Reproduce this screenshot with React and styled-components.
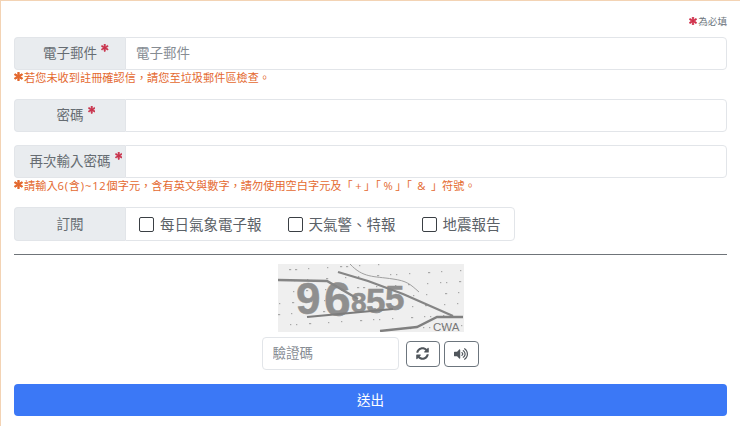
import React from 'react';
import styled, { createGlobalStyle } from 'styled-components';
import { FaSyncAlt, FaVolumeUp, FaAsterisk } from 'react-icons/fa';

const GlobalStyle = createGlobalStyle`
  html, body {
    margin: 0;
    padding: 0;
    background: #fff;
  }
  * {
    box-sizing: border-box;
  }
`;

const Page = styled.div`
  width: 740px;
  height: 426px;
  overflow: hidden;
  border-top: 1px solid #f3d3b4;
  border-left: 1px solid #f3d3b4;
  padding: 14px 13px 0 13px;
  font-family: "Open Sans", "Noto Sans CJK TC", "Liberation Sans", sans-serif;
  color: #212529;
`;

const RequiredNote = styled.div`
  display: flex;
  justify-content: flex-end;
  align-items: center;
  gap: 1px;
  height: 14px;
  padding-bottom: 2px;
  font-size: 9.6px;
  color: #6c757d;
  margin-bottom: 8px;
`;

const Star = styled(FaAsterisk)`
  width: ${(p) => p.$size || 8}px;
  height: ${(p) => p.$size || 8}px;
  color: ${(p) => p.$color || '#d0304a'};
  stroke: currentColor;
  stroke-width: 50;
  flex: none;
`;

const Group = styled.div`
  display: flex;
  width: ${(p) => p.$width || '713px'};
  height: ${(p) => p.$height || 33}px;
  margin-bottom: ${(p) => p.$gap || 0}px;
`;

const Label = styled.div`
  width: 111px;
  flex: none;
  display: flex;
  justify-content: center;
  align-items: center;
  background: #e9ecef;
  border: 1px solid #e2e5e9;
  border-right: none;
  border-radius: 4px 0 0 4px;
  padding-bottom: 3px;
  font-size: 13.5px;
  color: #666c72;
`;

const LabelText = styled.span`
  position: relative;
`;

const LabelMark = styled(FaAsterisk)`
  position: absolute;
  left: 100%;
  top: 2px;
  margin-left: 4px;
  width: 7.5px;
  height: 7.5px;
  color: #c9304a;
  stroke: currentColor;
  stroke-width: 40;
`;

const Field = styled.input`
  flex: 1;
  min-width: 0;
  border: 1px solid #e2e5e9;
  border-radius: 0 4px 4px 0;
  padding: 0 10px 2px;
  font: inherit;
  font-size: 13.5px;
  outline: none;

  &::placeholder {
    color: #868c93;
    opacity: 1;
  }
`;

const Hint = styled.div`
  display: flex;
  align-items: center;
  gap: 1px;
  height: 15px;
  padding-bottom: 2px;
  font-size: 11.2px;
  color: #e4692f;
  margin-bottom: ${(p) => p.$gap || 0}px;
  white-space: pre;
`;

const Digits = styled.span`
  letter-spacing: 0.8px;
`;

const Symbol = styled.span`
  padding: 0 2.5px;
`;

const CheckPanel = styled.div`
  flex: 1;
  display: flex;
  align-items: center;
  gap: 26px;
  padding-left: 13px;
  border: 1px solid #e2e5e9;
  border-radius: 0 4px 4px 0;
`;

const CheckItem = styled.label`
  display: flex;
  align-items: center;
  gap: 6px;
  font-size: 14.5px;
  color: #5b6167;
`;

const CheckText = styled.span`
  position: relative;
  top: -1px;
`;

const Box = styled.input`
  appearance: none;
  width: 15px;
  height: 15px;
  margin: 0;
  background: #fff;
  border: 1px solid #3a3f44;
  border-radius: 2px;
`;

const Divider = styled.hr`
  margin: 13px 0 9px;
  border: none;
  border-top: 1px solid #6f7479;
`;

const CaptchaBlock = styled.div`
  display: flex;
  flex-direction: column;
  align-items: center;
  gap: 5px;
  margin-bottom: 14px;
`;

const CaptchaImage = styled.svg`
  display: block;
  width: 186px;
  height: 68px;
`;

const CaptchaRow = styled.div`
  display: flex;
  align-items: center;
  gap: 7px;
  margin-left: -1px;
`;

const CaptchaInput = styled.input`
  width: 137px;
  height: 33px;
  border: 1px solid #e2e5e9;
  border-radius: 4px;
  padding: 0 10px 2px;
  font: inherit;
  font-size: 13.5px;
  outline: none;

  &::placeholder {
    color: #868c93;
    opacity: 1;
  }
`;

const IconButton = styled.button`
  width: ${(p) => p.$width}px;
  height: 26px;
  display: flex;
  align-items: center;
  justify-content: center;
  padding: 0;
  background: #fff;
  border: 1px solid #6c757d;
  border-radius: 4px;
  color: #50565c;
  font-size: ${(p) => p.$icon}px;
`;

const IconGroup = styled.div`
  display: flex;
  gap: 4px;
`;

const Submit = styled.button`
  display: block;
  width: 713px;
  height: 32px;
  border: none;
  border-radius: 4px;
  background: #3b78f6;
  color: #fff;
  font: inherit;
  font-size: 13.5px;
  padding-bottom: 3px;
`;

// scattered noise of the captcha, same every render
const dots = Array.from({ length: 80 }, (_, i) => [
  (i * 67 + 11) % 184,
  (i * 29 + 5) % 66,
  i % 3 === 0 ? 2.2 : 1.3,
]);

const Captcha = () => (
  <CaptchaImage viewBox="0 0 186 68">
    <rect width="186" height="68" fill="#efefef" />
    {dots.map(([x, y, w]) => (
      <rect key={`${x}-${y}`} x={x} y={y} width={w} height="1.2" fill="#a8a8a8" />
    ))}
    <path d="M72 0 C85 14 95 12 115 15 C129 17 132 20 141 28" stroke="#a0a0a0" strokeWidth="1" fill="none" />
    <text fontFamily="Liberation Sans" fontWeight="700" fill="#8f8f8f" stroke="#8f8f8f" strokeWidth="0.5">
      <tspan x="18" y="50" fontSize="44">9</tspan>
      <tspan x="46" y="52" fontSize="48">6</tspan>
      <tspan x="73" y="48" fontSize="28">8</tspan>
      <tspan x="88" y="49" fontSize="35">5</tspan>
      <tspan x="107" y="46" fontSize="35">5</tspan>
    </text>
    <path d="M0 16 L49 17 L80 35" stroke="#858585" strokeWidth="2.4" fill="none" />
    <path d="M60 8 L90 17 L125 30 L175 52" stroke="#858585" strokeWidth="2.2" fill="none" />
    <path d="M29 53 L115 45" stroke="#7c7c7c" strokeWidth="2.2" fill="none" />
    <path d="M102 67 L139 63 L159 53 L185 53" stroke="#808080" strokeWidth="2.4" fill="none" />
    <text x="155" y="67" fontFamily="Liberation Sans" fontSize="11.5" fill="#777">CWA</text>
  </CaptchaImage>
);

const App = () => (
  <>
    <GlobalStyle />
    <Page lang="zh-Hant">
      <RequiredNote>
        <Star $size={8} />
        為必填
      </RequiredNote>

      <Group>
        <Label>
          <LabelText>電子郵件<LabelMark /></LabelText>
        </Label>
        <Field placeholder="電子郵件" />
      </Group>
      <Hint $gap={14}>
        <Star $size={9} $color="#e4692f" />
        <span>若您未收到註冊確認信，請您至垃圾郵件區檢查。</span>
      </Hint>

      <Group $gap={13}>
        <Label>
          <LabelText>密碼<LabelMark /></LabelText>
        </Label>
        <Field />
      </Group>

      <Group>
        <Label>
          <LabelText>再次輸入密碼<LabelMark /></LabelText>
        </Label>
        <Field />
      </Group>
      <Hint $gap={14}>
        <Star $size={9} $color="#e4692f" />
        <span>
          請輸入<Digits>6(含)~12</Digits>個字元，含有英文與數字，請勿使用空白字元及「<Symbol>+</Symbol>」「<Symbol>%</Symbol>」「 <Symbol>&amp;</Symbol> 」符號。
        </span>
      </Hint>

      <Group $width="501px" $height={34}>
        <Label>訂閱</Label>
        <CheckPanel>
          <CheckItem>
            <Box type="checkbox" />
            <CheckText>每日氣象電子報</CheckText>
          </CheckItem>
          <CheckItem>
            <Box type="checkbox" />
            <CheckText>天氣警、特報</CheckText>
          </CheckItem>
          <CheckItem>
            <Box type="checkbox" />
            <CheckText>地震報告</CheckText>
          </CheckItem>
        </CheckPanel>
      </Group>

      <Divider />

      <CaptchaBlock>
        <Captcha />
        <CaptchaRow>
          <CaptchaInput placeholder="驗證碼" />
          <IconGroup>
            <IconButton $width={34} $icon={13}>
              <FaSyncAlt />
            </IconButton>
            <IconButton $width={35} $icon={14}>
              <FaVolumeUp />
            </IconButton>
          </IconGroup>
        </CaptchaRow>
      </CaptchaBlock>

      <Submit>送出</Submit>
    </Page>
  </>
);

export default App;
